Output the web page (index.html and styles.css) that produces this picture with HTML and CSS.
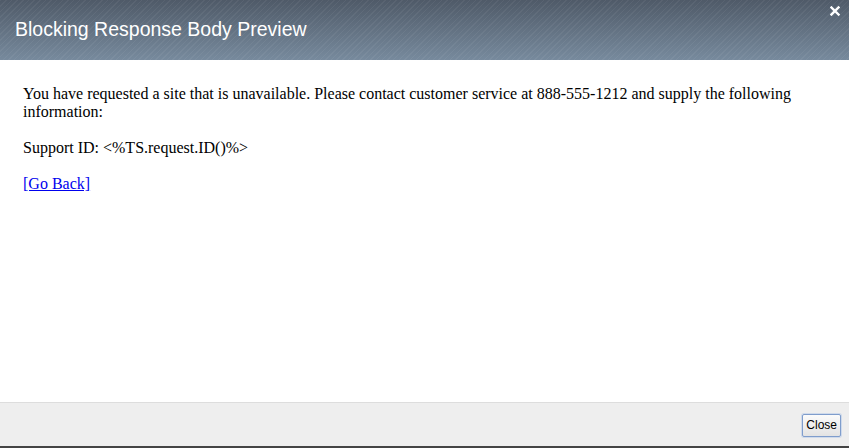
FILE: index.html
```html
<!DOCTYPE html>
<html>
<head>
<meta charset="utf-8">
<title>Blocking Response Body Preview</title>
<link rel="stylesheet" href="styles.css">
</head>
<body>
<div class="dialog">
  <div class="titlebar">
    <span class="title">Blocking Response Body Preview</span>
    <span class="close-x" aria-label="close">
      <svg width="10" height="10" viewBox="0 0 10 10"><path d="M1.5 1.5 L8.5 8.5 M8.5 1.5 L1.5 8.5" stroke="#fff" stroke-width="2.4" stroke-linecap="square"/></svg>
    </span>
  </div>
  <div class="content">
    <p>You have requested a site that is unavailable. Please contact customer service at 888-555-1212 and supply the following information:</p>
    <p>Support ID: &lt;%TS.request.ID()%&gt;</p>
    <p><a href="#">[Go Back]</a></p>
  </div>
  <div class="footer">
    <button class="btn">Close</button>
  </div>
</div>
</body>
</html>
```
FILE: styles.css
```css
html, body {
  margin: 0;
  padding: 0;
  background: #fff;
}
.dialog {
  width: 849px;
  height: 448px;
  display: flex;
  flex-direction: column;
  box-sizing: border-box;
  border-bottom: 2px solid #444;
}
.titlebar {
  height: 60px;
  flex: none;
  display: flex;
  align-items: center;
  justify-content: space-between;
  padding: 0 9px 0 15px;
  position: relative;
  background:
    repeating-linear-gradient(135deg, rgba(255,255,255,0.05) 0 1px, rgba(0,0,0,0) 1px 4px),
    linear-gradient(#4f5a68, #778a9d);
}
.title {
  font-family: "Liberation Sans", Arial, sans-serif;
  font-size: 19.5px;
  color: #fff;
  margin-top: -1px;
}
.close-x {
  position: absolute;
  right: 9px;
  top: 6px;
  width: 10px;
  height: 10px;
  display: block;
}
.close-x svg { display: block; }
.content {
  flex: 1;
  padding: 7px 23px 0 23px;
  font-family: "Liberation Serif", "Times New Roman", serif;
  font-size: 16px;
  line-height: 18px;
  color: #000;
}
.content p {
  margin: 18px 0;
}
.content a {
  color: #0000ee;
  text-decoration: underline;
}
.footer {
  height: 44px;
  flex: none;
  box-sizing: border-box;
  background: #eee;
  border-top: 1px solid #ddd;
  display: flex;
  align-items: center;
  justify-content: flex-end;
  padding: 0 8px 0 0;
}
.btn {
  font-family: "Liberation Sans", Arial, sans-serif;
  font-size: 12px;
  color: #000;
  height: 23px;
  padding: 0 3px;
  border: 1px solid #7f9dcc;
  border-radius: 2px;
  background: linear-gradient(#fbfbfb, #e3e3e3);
  box-shadow: 0 0 0 1px rgba(150,180,230,0.35);
  margin-top: 1px;
}
```
